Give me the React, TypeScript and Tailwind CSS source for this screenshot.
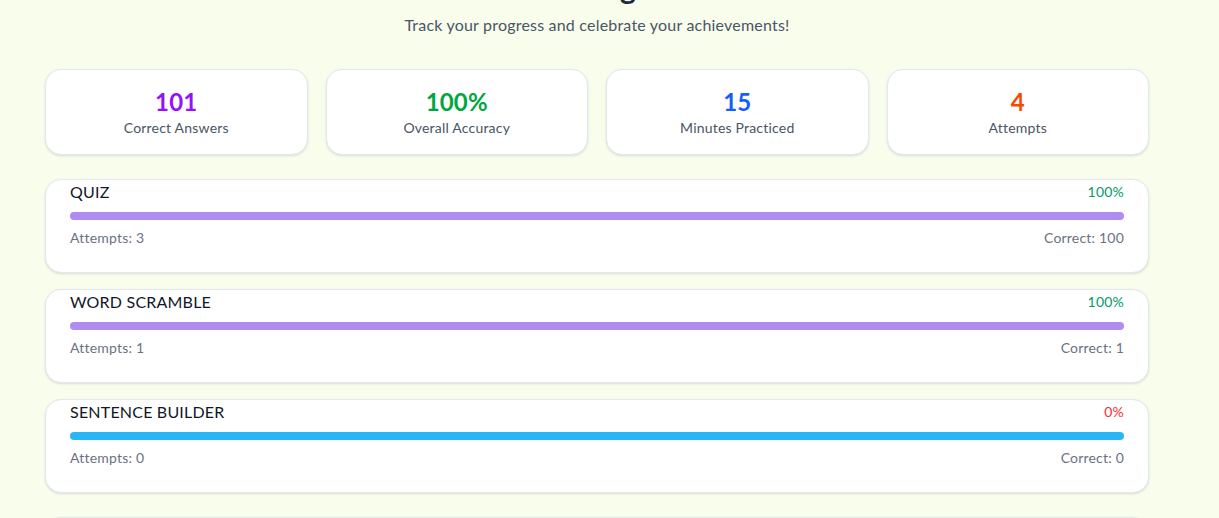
const stats = [
  { value: "101", label: "Correct Answers", color: "text-purple-600" },
  { value: "100%", label: "Overall Accuracy", color: "text-green-600" },
  { value: "15", label: "Minutes Practiced", color: "text-blue-600" },
  { value: "4", label: "Attempts", color: "text-orange-600" },
];

const games = [
  { name: "QUIZ", pct: "100%", good: true, attempts: 3, correct: 100, bar: "bg-[#b08cf0]" },
  { name: "WORD SCRAMBLE", pct: "100%", good: true, attempts: 1, correct: 1, bar: "bg-[#b08cf0]" },
  { name: "SENTENCE BUILDER", pct: "0%", good: false, attempts: 0, correct: 0, bar: "bg-[#29b6f6]" },
];

const App = () => {
  return (
    <div className="min-h-screen bg-[#f9fdec] font-['Lato','Noto_Sans',sans-serif] tracking-[0.2px] overflow-hidden">
      <div className="ml-[45px] w-[1104px]">
        {/* header, scrolled partly out of view */}
        <div className="-mt-[31px] text-center mb-8">
          <h1 className="text-3xl font-bold text-slate-800 mb-2">Your Progress</h1>
          <p className="text-base text-gray-600">Track your progress and celebrate your achievements!</p>
        </div>

        <div className="grid grid-cols-4 gap-[18px] mb-6">
          {stats.map((s) => (
            <div
              key={s.label}
              className="bg-white border border-slate-200 rounded-2xl shadow-sm p-4 text-center"
            >
              <div className={`text-2xl font-bold ${s.color}`}>{s.value}</div>
              <div className="text-sm text-gray-600">{s.label}</div>
            </div>
          ))}
        </div>

        <div className="space-y-4">
          {games.map((g) => (
            <div
              key={g.name}
              className="bg-white border border-slate-200 rounded-2xl shadow-sm px-6 pb-6"
            >
              <div className="flex items-center justify-between">
                <span className="text-base text-gray-900">{g.name}</span>
                <span className={`text-sm ${g.good ? "text-emerald-600" : "text-red-500"}`}>{g.pct}</span>
              </div>
              <div className={`mt-2 h-2 w-full rounded-full ${g.bar}`} />
              <div className="mt-2 flex justify-between text-sm text-gray-500">
                <span>Attempts: {g.attempts}</span>
                <span>Correct: {g.correct}</span>
              </div>
            </div>
          ))}
        </div>

        <div className="mt-6 h-24 bg-white border border-slate-200 rounded-2xl shadow-sm" />
      </div>
    </div>
  );
};

export default App;
